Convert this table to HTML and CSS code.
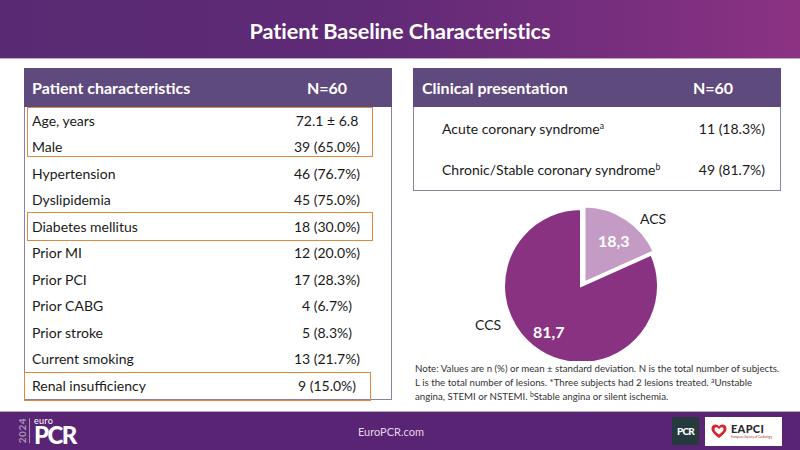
FILE: index.html
```html
<!DOCTYPE html>
<html lang="en">
<head>
<meta charset="utf-8">
<title>Patient Baseline Characteristics</title>
<link rel="stylesheet" href="styles.css">
</head>
<body>
<header class="topbar">
  <h1 class="title">Patient Baseline Characteristics</h1>
</header>
<main class="content">
  <section class="left">
    <div class="tbl">
      <div class="thead"><span class="lbl">Patient characteristics</span><span class="val">N=60</span></div>
      <div class="tbody">
        <div class="group hl-top">
          <div class="row"><span class="lbl">Age, years</span><span class="val">72.1 ± 6.8</span></div>
          <div class="row"><span class="lbl">Male</span><span class="val">39 (65.0%)</span></div>
        </div>
        <div class="row"><span class="lbl">Hypertension</span><span class="val">46 (76.7%)</span></div>
        <div class="row"><span class="lbl">Dyslipidemia</span><span class="val">45 (75.0%)</span></div>
        <div class="group hl-mid">
          <div class="row"><span class="lbl">Diabetes mellitus</span><span class="val">18 (30.0%)</span></div>
        </div>
        <div class="row"><span class="lbl">Prior MI</span><span class="val">12 (20.0%)</span></div>
        <div class="row"><span class="lbl">Prior PCI</span><span class="val">17 (28.3%)</span></div>
        <div class="row"><span class="lbl">Prior CABG</span><span class="val">4 (6.7%)</span></div>
        <div class="row"><span class="lbl">Prior stroke</span><span class="val">5 (8.3%)</span></div>
        <div class="row"><span class="lbl">Current smoking</span><span class="val">13 (21.7%)</span></div>
        <div class="group hl-bot">
          <div class="row"><span class="lbl">Renal insufficiency</span><span class="val">9 (15.0%)</span></div>
        </div>
      </div>
    </div>
  </section>
  <section class="right">
    <div class="tbl tbl-r">
      <div class="thead"><span class="lbl">Clinical presentation</span><span class="val">N=60</span></div>
      <div class="tbody">
        <div class="row"><span class="lbl">Acute coronary syndrome<sup>a</sup></span><span class="val">11 (18.3%)</span></div>
        <div class="row"><span class="lbl">Chronic/Stable coronary syndrome<sup>b</sup></span><span class="val">49 (81.7%)</span></div>
      </div>
    </div>
    <div class="chart">
      <svg class="pie" width="368" height="170" viewBox="0 0 368 170">
        <path d="M168 95 L 238.35 63.63 A 77 77 0 1 1 168 18 Z" fill="#8a3282" stroke="#ffffff" stroke-width="2"/>
        <path d="M171 92 L 171 15 A 77 77 0 0 1 241.35 60.63 Z" fill="#c49bc4" stroke="#ffffff" stroke-width="3"/>
        <text x="227" y="33" class="pl">ACS</text>
        <text x="185" y="56" class="pv">18,3</text>
        <text x="62" y="139" class="pl">CCS</text>
        <text x="120" y="147" class="pv">81,7</text>
      </svg>
    </div>
    <p class="note">Note: Values are n (%) or mean ± standard deviation. N is the total number of subjects. L is the total number of lesions. *Three subjects had 2 lesions treated. <sup>a</sup>Unstable angina, STEMI or NSTEMI. <sup>b</sup>Stable angina or silent ischemia.</p>
  </section>
</main>
<footer class="foot">
  <div class="brand">
    <span class="year">2024</span>
    <span class="brand-words"><span class="euro">euro</span><span class="pcr">PCR</span></span>
  </div>
  <span class="site">EuroPCR.com</span>
  <div class="partners">
    <span class="pcr-box">PCR</span>
    <span class="eapci-box">
      <svg class="heart" width="16" height="15" viewBox="0 0 16 15">
        <path d="M8 14 C 2 9.5 0.5 7 0.5 4.5 C 0.5 2 2.5 0.5 4.5 0.5 C 6 0.5 7.3 1.3 8 2.6 C 8.7 1.3 10 0.5 11.5 0.5 C 13.5 0.5 15.5 2 15.5 4.5 C 15.5 7 14 9.5 8 14 Z" fill="#d6262d"/>
        <path d="M8 10.5 C 4.5 8 3.5 6.5 3.5 5 C 3.5 4 4.3 3.3 5.2 3.3 C 6.2 3.3 7.3 4.2 8 5.3 C 8.7 4.2 9.8 3.3 10.8 3.3 C 11.7 3.3 12.5 4 12.5 5 C 12.5 6.5 11.5 8 8 10.5 Z" fill="#ffffff"/>
      </svg>
      <span class="eapci-text"><span class="eapci-name">EAPCI</span><span class="eapci-sub">European Society of Cardiology</span></span>
    </span>
  </div>
</footer>
</body>
</html>
```

FILE: styles.css
```css
* { box-sizing: border-box; }
html, body { margin: 0; padding: 0; }
body {
  width: 800px;
  height: 450px;
  overflow: hidden;
  background: #ffffff;
  font-family: Lato, "Open Sans", "Liberation Sans", sans-serif;
  color: #1a1a1a;
  display: flex;
  flex-direction: column;
}
.topbar {
  height: 59px;
  padding-top: 4px;
  background: linear-gradient(90deg, #592a73 0%, #5f2a76 45%, #752e7d 75%, #8c3283 100%);
  border-bottom: 1px solid #b9a9c6;
  display: flex;
  align-items: center;
  justify-content: center;
}
.title {
  margin: 0;
  color: #ffffff;
  font-size: 21.7px;
  font-weight: 700;
  letter-spacing: -0.1px;
}
.content {
  flex: 1;
  display: flex;
  gap: 21px;
  padding: 9px 0 0 24px;
}
.left, .right { width: 368px; }
.tbl { display: flex; flex-direction: column; }
.thead {
  height: 39px;
  background: #5f4a7e;
  color: #ffffff;
  font-weight: 700;
  font-size: 16px;
  display: flex;
  align-items: center;
  padding-left: 8px;
}
.thead .lbl { flex: 1; }
.thead .val { width: 80px; text-align: center; margin-right: 25px; }
.tbody {
  border: 1px solid #8b80a6;
  border-top: none;
}
.row {
  height: 26.5px;
  display: flex;
  align-items: center;
  padding-left: 7px;
  font-size: 14px;
  color: #1a1a1a;
}
.row .lbl { flex: 1; }
.row .val { width: 80px; text-align: center; margin-right: 24px; }
.group { position: relative; }
.group::after {
  content: "";
  position: absolute;
  border: 1.5px solid #e0883c;
  pointer-events: none;
}
.hl-top::after { top: 0; bottom: 3px; left: 2px; right: 18px; }
.hl-mid::after { top: -1px; bottom: -1px; left: 2px; right: 18px; }
.hl-bot::after { top: 0; bottom: -2px; left: -1px; right: 20px; }

.tbl-r .thead { padding-left: 9px; }
.tbl-r .thead .val { margin-right: 28px; }
.tbl-r .tbody { padding: 1px 0 0 0; }
.tbl-r .row { height: 41px; padding-left: 28px; }
.tbl-r .row .val { text-align: right; margin-right: 15px; }
sup { font-size: 0.62em; vertical-align: 0.55em; line-height: 0; }
.chart { height: 170px; }
.pie { display: block; }
.pl { font-size: 14px; fill: #1a1a1a; font-family: Lato, "Open Sans", sans-serif; }
.pv { font-size: 16px; font-weight: 700; fill: #ffffff; font-family: Lato, "Open Sans", sans-serif; }
.note {
  margin: 0 0 0 2px;
  font-size: 9.7px;
  line-height: 14px;
  color: #333333;
  width: 366px;
}
.note sup { font-size: 0.7em; vertical-align: 0.45em; }

.foot {
  height: 39px;
  background: #5a2474;
  border-top: 1px solid #b8a7c6;
  display: flex;
  align-items: center;
  padding: 0 18px 0 17px;
  position: relative;
}
.brand { display: flex; align-items: center; height: 30px; width: 320px; }
.year {
  writing-mode: vertical-rl;
  transform: rotate(180deg);
  font-size: 10px;
  font-weight: 700;
  color: #a493b6;
  letter-spacing: 0.5px;
  line-height: 10px;
  border-left: 1px solid #a493b6;
  padding-left: 2px;
}
.brand-words { display: flex; flex-direction: column; margin-left: 4px; line-height: 1; }
.euro { font-size: 9px; color: #ffffff; letter-spacing: 0.3px; }
.pcr { font-size: 24px; font-weight: 900; color: #ffffff; letter-spacing: -1.5px; margin-top: -2px; }
.site { font-size: 11px; color: #e0d4e8; flex: 1; padding-left: 21px; }
.partners { display: flex; align-items: center; gap: 6px; }
.pcr-box {
  width: 27px; height: 28px;
  background: #263a3e;
  color: #ffffff;
  font-weight: 900;
  font-size: 10px;
  letter-spacing: -0.8px;
  display: flex; align-items: center; justify-content: center;
}
.eapci-box {
  width: 77px; height: 29px;
  background: #ffffff;
  display: flex; align-items: center;
  padding-left: 6px; gap: 4px;
}
.heart { display: block; }
.eapci-text { display: flex; flex-direction: column; line-height: 1; }
.eapci-name { font-size: 11px; font-weight: 900; color: #2a2a2a; letter-spacing: 0.3px; }
.eapci-sub { font-size: 3px; color: #b0343a; margin-top: 2px; }
```
